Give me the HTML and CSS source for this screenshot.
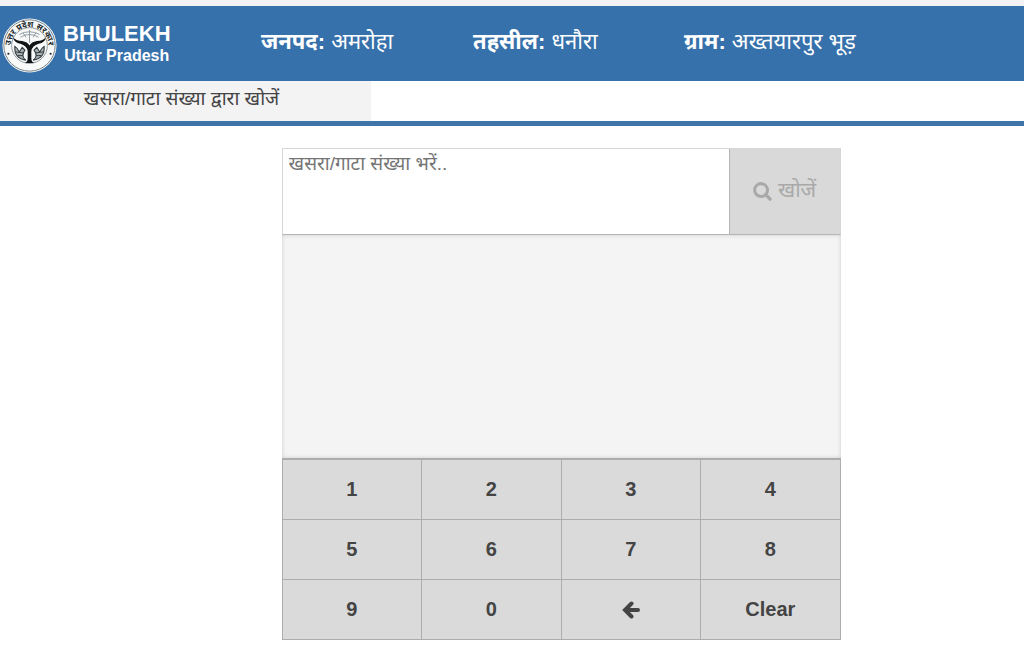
FILE: index.html
```html
<!DOCTYPE html>
<html lang="hi">
<head>
<meta charset="utf-8">
<meta name="viewport" content="width=device-width, initial-scale=1">
<title>Bhulekh Uttar Pradesh</title>
<link rel="stylesheet" href="styles.css">
</head>
<body>
<header class="header">
  <div class="brand">
    <svg class="emblem" viewBox="0 0 60 60" role="img" aria-label="उत्तर प्रदेश सरकार">
      <defs><path id="ring" d="M10 35 A20.500 20.500 0 1 1 50 35"/></defs>
      <circle cx="30" cy="30" r="29.500" fill="#f8fafa"/>
      <circle cx="30" cy="30" r="28" fill="none" stroke="#6d787d" stroke-width="1"/>
      <circle cx="30" cy="30" r="19.500" fill="none" stroke="#8a9498" stroke-width="1"/>
      <text class="emblem-text"><textPath href="#ring" startOffset="50%" text-anchor="middle">उत्तर प्रदेश सरकार</textPath></text>
      <path d="M19 18 Q30 12 41 18 M20 21 Q30 15 40 21 M30 13 V27 M23 16 l3 5 M37 16 l-3 5" fill="none" stroke="#8a9498" stroke-width="1"/>
      <path d="M12 21 Q15 25 22 25 Q28 26 30 30 Q32 26 38 25 Q45 25 48 21 Q47 27 40 28 Q33 30 32 36 L32 44 Q32 48 35 49 L25 49 Q28 48 28 44 L28 36 Q27 30 20 28 Q13 27 12 21Z" fill="#111517"/>
      <path d="M14 31 Q13 44 26 46 Q20 42 25 35 L22 32 L19 37 Q17 33 14 31Z M46 31 Q47 44 34 46 Q40 42 35 35 L38 32 L41 37 Q43 33 46 31Z" fill="#a5afb2" stroke="#30383c" stroke-width="1.200"/>
      <path d="M15 37 l8 1 M17 41 l6 0 M45 37 l-8 1 M43 41 l-6 0" stroke="#30383c" stroke-width="1"/>
      <circle cx="7" cy="39" r="1.200" fill="#22282b"/><circle cx="53" cy="39" r="1.200" fill="#22282b"/>
    </svg>
    <div class="brand-text">
      <span class="brand-name">BHULEKH</span>
      <span class="brand-state">Uttar Pradesh</span>
    </div>
  </div>
  <div class="location"><b>जनपद:</b> अमरोहा</div>
  <div class="location"><b>तहसील:</b> धनौरा</div>
  <div class="location"><b>ग्राम:</b> अख्तयारपुर भूड़</div>
</header>
<nav class="tabs"><a class="tab" href="#search">खसरा/गाटा संख्या द्वारा खोजें</a></nav>
<main class="panel" id="search">
  <form class="search">
    <input class="search-input" type="text" aria-label="खसरा/गाटा संख्या" placeholder="खसरा/गाटा संख्या भरें..">
    <button class="search-button" type="button" disabled>
      <svg class="search-icon" viewBox="0 0 20 20" aria-hidden="true"><circle cx="8.500" cy="8.500" r="6.800" fill="none" stroke="currentColor" stroke-width="3.200"/><path d="M13.500 13.500 L18 18" stroke="currentColor" stroke-width="3.600" stroke-linecap="round"/></svg>
      <span>खोजें</span>
    </button>
  </form>
  <div class="results"></div>
  <div class="keypad">
    <button class="key" type="button">1</button>
    <button class="key" type="button">2</button>
    <button class="key" type="button">3</button>
    <button class="key" type="button">4</button>
    <button class="key" type="button">5</button>
    <button class="key" type="button">6</button>
    <button class="key" type="button">7</button>
    <button class="key" type="button">8</button>
    <button class="key" type="button">9</button>
    <button class="key" type="button">0</button>
    <button class="key" type="button" aria-label="Backspace"><svg class="back-icon" viewBox="0 0 18 18" aria-hidden="true"><path d="M9.500 2.500 L3 9 L9.500 15.500 M3.500 9 H16" fill="none" stroke="currentColor" stroke-width="4" stroke-linecap="round"/></svg></button>
    <button class="key" type="button">Clear</button>
  </div>
</main>
</body>
</html>
```
FILE: styles.css
```css
* { box-sizing: border-box; }

body {
  margin: 0;
  background: #fff;
  color: #444;
  font-family: "Liberation Sans", "Noto Sans Devanagari", "Noto Sans", sans-serif;
  border-top: 6px solid #f3f3f6;
}

.header {
  display: grid;
  grid-template-columns: 261fr 212fr 211fr 340fr;
  align-items: center;
  min-height: 75px;
  background: #3671ab;
  color: #fff;
}

.brand {
  display: flex;
  align-items: center;
  gap: 6px;
  padding-left: 2px;
}

.emblem { width: 55px; height: 55px; margin-top: 3px; }
.emblem-text { font-size: 9px; font-weight: 700; fill: #22282b; }
.brand-text { display: flex; flex-direction: column; align-items: center; }
.brand-name { font-size: 22px; line-height: 24px; font-weight: 700; }
.brand-state { font-size: 16px; line-height: 20px; font-weight: 700; }

.location { padding-bottom: 4px; font-size: 22px; line-height: 32px; white-space: nowrap; }

.tabs {
  display: flex;
  border-bottom: 5px solid #3f74a9;
}

.tab {
  width: 371px;
  height: 40px;
  padding-right: 8px;
  background: #f3f3f4;
  color: #444;
  font-size: 19px;
  line-height: 36px;
  text-align: center;
  text-decoration: none;
}

.panel {
  width: 559px;
  max-width: 70%;
  margin: 22px 0 0 27.5%;
}

.search {
  display: flex;
  border: 1px solid #d6d6d6;
  border-bottom-color: #b5b5b5;
}

.search-input {
  flex: 1;
  min-width: 0;
  padding: 0 6px 55px;
  border: 0;
  background: #fff;
  color: #444;
  font: inherit;
  font-size: 19px;
  line-height: 30px;
}

.search-input::placeholder { color: #757575; opacity: 1; }

.search-button {
  display: flex;
  align-items: center;
  justify-content: center;
  gap: 6px;
  width: 111px;
  padding: 0;
  border: 0;
  border-left: 1px solid #b5b5b5;
  background: #d9d9d9;
  color: #a9a9a9;
  font: inherit;
  font-size: 21px;
}

.search-icon { width: 19px; height: 19px; }

.results {
  height: 223px;
  background: #f4f4f4;
  box-shadow: inset 0 0 4px #ccc;
}

.keypad {
  display: grid;
  grid-template-columns: repeat(4, 1fr);
  gap: 1px;
  padding: 2px 1px 1px;
  background: #adadad;
}

.key {
  display: flex;
  align-items: center;
  justify-content: center;
  height: 59px;
  padding: 0;
  border: 0;
  background: #dadada;
  color: #444;
  font: inherit;
  font-size: 20px;
  font-weight: 700;
}

.back-icon { width: 18px; height: 18px; }
```
